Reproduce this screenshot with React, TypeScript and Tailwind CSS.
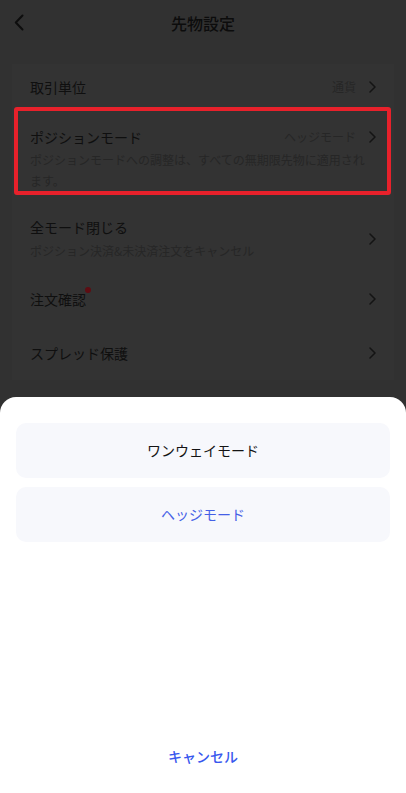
const FONT = { fontFamily: '"Noto Sans CJK JP", "Noto Sans", sans-serif' }

function Chevron({ className = '' }: { className?: string }) {
  return (
    <svg width="7" height="12" viewBox="0 0 7 12" fill="none" className={className}>
      <path d="M1 1l5 5-5 5" stroke="#141414" strokeWidth="1.5" strokeLinecap="round" strokeLinejoin="round" />
    </svg>
  )
}

export default function App() {
  return (
    <div style={FONT} className="relative h-[793px] w-[406px] overflow-hidden bg-[#313131]">
      {/* header */}
      <div className="relative flex h-[46px] items-center justify-center">
        <svg width="10" height="17" viewBox="0 0 10 17" fill="none" className="absolute left-[14px] top-[14px]">
          <path d="M8.5 1.5L1.8 8.5l6.7 7" stroke="#0d0d0d" strokeWidth="2" strokeLinecap="round" strokeLinejoin="round" />
        </svg>
        <span className="text-[16px] font-medium text-[#0c0c0c]">先物設定</span>
      </div>

      {/* settings card */}
      <div className="mx-3 mt-[18px] bg-[#333333]">
        <div className="flex items-center justify-between py-3 pl-[18px] pr-[18px]">
          <span className="text-[14px] leading-[22px] text-[#0f0f0f]">取引単位</span>
          <div className="flex items-center gap-[13px]">
            <span className="text-[12px] text-[#262626]">通貨</span>
            <Chevron />
          </div>
        </div>

        <div className="relative pb-[9px] pl-[18px] pr-[18px] pt-4">
          <div className="flex items-center justify-between">
            <span className="text-[14px] leading-[22px] text-[#0f0f0f]">ポジションモード</span>
            <div className="flex items-center gap-[13px]">
              <span className="text-[12px] text-[#262626]">ヘッジモード</span>
              <Chevron />
            </div>
          </div>
          <p className="mt-[1px] pr-[5px] text-[12px] leading-[21px] text-[#262626]">
            ポジションモードへの調整は、すべての無期限先物に適用されます。
          </p>
          <div className="absolute -top-[3px] bottom-[5px] left-[2px] right-[3px] rounded-[3px] border-4 border-[#e8212b]" />
        </div>

        <div className="flex items-center justify-between pb-[11px] pl-[18px] pr-[18px] pt-4">
          <div>
            <div className="text-[14px] leading-[22px] text-[#0f0f0f]">全モード閉じる</div>
            <div className="mt-[2px] text-[12px] leading-[21px] text-[#262626]">ポジション決済&amp;未決済注文をキャンセル</div>
          </div>
          <Chevron />
        </div>

        <div className="flex items-center justify-between py-4 pl-[18px] pr-[18px]">
          <span className="relative text-[14px] leading-[22px] text-[#0f0f0f]">
            注文確認
            <span className="absolute -right-[5px] top-[-1px] h-[6px] w-[6px] rounded-full bg-[#5e0d13]" />
          </span>
          <Chevron />
        </div>

        <div className="flex items-center justify-between py-4 pl-[18px] pr-[18px]">
          <span className="text-[14px] leading-[22px] text-[#0f0f0f]">スプレッド保護</span>
          <Chevron />
        </div>
      </div>

      {/* bottom sheet */}
      <div className="absolute inset-x-0 bottom-0 top-[397px] flex flex-col rounded-t-[16px] bg-white">
        <div className="mx-4 mt-[26px] flex flex-col gap-[9px]">
          <button className="flex h-[55px] items-center justify-center rounded-[10px] bg-[#f7f8fc] text-[14px] text-[#141414]">
            ワンウェイモード
          </button>
          <button className="flex h-[55px] items-center justify-center rounded-[10px] bg-[#f7f8fc] text-[14px] text-[#4560e6]">
            ヘッジモード
          </button>
        </div>
        <div className="mt-auto flex h-[74px] items-center justify-center">
          <span className="text-[14px] font-medium text-[#3858ee]">キャンセル</span>
        </div>
      </div>
    </div>
  )
}
